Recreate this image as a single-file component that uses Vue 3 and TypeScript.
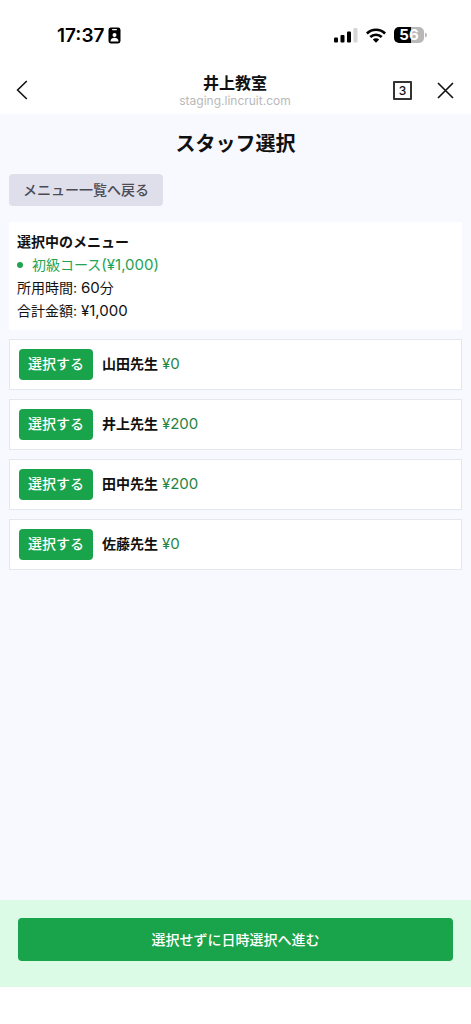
<script setup lang="ts">
interface Staff {
  id: number
  name: string
  fee: number
}

const menuItems = [{ id: 1, name: '初級コース', price: 1000 }]

const staffList: Staff[] = [
  { id: 1, name: '山田先生', fee: 0 },
  { id: 2, name: '井上先生', fee: 200 },
  { id: 3, name: '田中先生', fee: 200 },
  { id: 4, name: '佐藤先生', fee: 0 },
]

const total = menuItems.reduce((sum, item) => sum + item.price, 0)
const yen = (value: number): string => '¥' + value.toLocaleString('en-US')
</script>

<template>
  <div class="screen">
    <div class="status">
      <div class="clock">
        <span>17:37</span>
        <svg width="13" height="17" viewBox="0 0 13 17" aria-hidden="true">
          <rect x="0.5" y="0.5" width="12" height="16" rx="2.4" fill="#000" />
          <rect x="4" y="2" width="5" height="1.2" rx="0.6" fill="#fff" />
          <circle cx="6.5" cy="8" r="2" fill="#fff" />
          <path d="M2.5 14.5c0-2.6 1.6-3.8 4-3.8s4 1.2 4 3.8z" fill="#fff" />
        </svg>
      </div>
      <div class="signals">
        <svg width="24" height="16" viewBox="0 0 24 16" aria-hidden="true">
          <rect x="0" y="10.5" width="4" height="5" rx="1" />
          <rect x="6.5" y="8" width="4" height="7.5" rx="1" />
          <rect x="13" y="4.5" width="4" height="11" rx="1" />
          <rect x="19.5" y="1" width="4" height="14.5" rx="1" fill="#d6d6d6" />
        </svg>
        <svg width="20" height="15" viewBox="0 0 20 15" aria-hidden="true">
          <g fill="none" stroke="#000" stroke-width="2.6">
            <path d="M0.9 5.5a13 13 0 0 1 18.2 0" />
            <path d="M4.3 9a8.2 8.2 0 0 1 11.4 0" />
          </g>
          <path d="M10 14.8l-3.2-3.3a4.6 4.6 0 0 1 6.4 0z" />
        </svg>
        <div class="battery">
          <span class="level">56</span>
          <svg width="2" height="6" viewBox="0 0 2 6" aria-hidden="true">
            <path d="M0 0.5q2 0.6 2 2.5t-2 2.5z" fill="#b8b8b8" />
          </svg>
        </div>
      </div>
    </div>

    <header class="bar">
      <button class="icon" type="button" aria-label="戻る">
        <svg width="12" height="20" viewBox="0 0 12 20" aria-hidden="true">
          <path d="M10.8 1L1.6 10l9.2 9" fill="none" stroke="#111" stroke-width="1.6" />
        </svg>
      </button>
      <div class="site">
        <p class="site-name">井上教室</p>
        <p class="site-url">staging.lincruit.com</p>
      </div>
      <div class="actions">
        <button class="tabs" type="button">3</button>
        <button class="icon" type="button" aria-label="閉じる">
          <svg width="17" height="17" viewBox="0 0 17 17" aria-hidden="true">
            <path d="M1 1l15 15M16 1L1 16" fill="none" stroke="#111" stroke-width="1.6" />
          </svg>
        </button>
      </div>
    </header>

    <main class="content">
      <h1>スタッフ選択</h1>
      <button class="back" type="button">メニュー一覧へ戻る</button>

      <section class="summary">
        <h2>選択中のメニュー</h2>
        <ul>
          <li v-for="item in menuItems" :key="item.id">
            <span>{{ item.name }}<span class="num">({{ yen(item.price) }})</span></span>
          </li>
        </ul>
        <p>所用時間: <span class="num">60</span>分</p>
        <p>合計金額: <span class="num">{{ yen(total) }}</span></p>
      </section>

      <ul class="staff">
        <li v-for="staff in staffList" :key="staff.id">
          <button class="choose" type="button">選択する</button>
          <span class="label"><b>{{ staff.name }}</b> <span class="num fee">{{ yen(staff.fee) }}</span></span>
        </li>
      </ul>
    </main>

    <footer class="foot">
      <button class="proceed" type="button">選択せずに日時選択へ進む</button>
    </footer>
  </div>
</template>

<style>
body {
  margin: 0;
  background: #fff;
}
</style>

<style scoped>
.screen {
  box-sizing: border-box;
  min-height: 100vh;
  padding-bottom: 37px;
  display: flex;
  flex-direction: column;
  background: #fff;
  color: #111;
  font-family: Inter, "Noto Sans CJK JP", sans-serif;
  font-size: 14px;
  line-height: 23px;
}

h1,
h2,
p,
ul {
  margin: 0;
  padding: 0;
  font-size: inherit;
}

ul {
  list-style: none;
}

button {
  border: 0;
  margin: 0;
  padding: 0;
  font: inherit;
  color: inherit;
  background: none;
  cursor: pointer;
}

svg {
  display: block;
}

.num {
  font-size: 15px;
  line-height: 20px;
}

.status {
  height: 66px;
  padding: 4px 44px 0 57px;
  box-sizing: border-box;
  display: flex;
  align-items: center;
  justify-content: space-between;
  color: #000;
}

.clock {
  display: flex;
  align-items: center;
  gap: 4px;
  font-size: 19px;
  font-weight: 600;
}

.signals {
  display: flex;
  align-items: center;
  gap: 8px;
}

.battery {
  display: flex;
  align-items: center;
  gap: 1px;
}

.level {
  width: 30px;
  height: 16px;
  border-radius: 5px;
  background: linear-gradient(90deg, #000 56%, #b8b8b8 56%);
  color: #fff;
  font-size: 15px;
  font-weight: 700;
  line-height: 16px;
  text-align: center;
}

.bar {
  height: 48px;
  padding: 0 17px 0 16px;
  display: grid;
  grid-template-columns: 1fr auto 1fr;
  align-items: center;
}

.icon {
  justify-self: start;
}

.site {
  padding-top: 2px;
  text-align: center;
}

.site-name {
  font-size: 16px;
  font-weight: 700;
  line-height: 20px;
}

.site-url {
  color: #b9b9b9;
  font-size: 12px;
  line-height: 16px;
}

.actions {
  display: flex;
  align-items: center;
  justify-content: flex-end;
  gap: 25px;
}

.tabs {
  box-sizing: border-box;
  width: 19px;
  height: 19px;
  border: 2px solid #333;
  border-radius: 1px;
  font-size: 12px;
  font-weight: 500;
  line-height: 15px;
}

.content {
  flex: 1;
  padding: 16px 9px;
  background: #f8f9fe;
}

h1 {
  margin-bottom: 16px;
  font-size: 20px;
  font-weight: 700;
  line-height: 28px;
  text-align: center;
}

.back {
  display: block;
  height: 32px;
  padding: 0 14px 2px;
  border-radius: 4px;
  background: #dfdfeb;
  color: #4b4b55;
  font-weight: 500;
}

.summary {
  margin: 16px 0 9px;
  padding: 8px;
  background: #fff;
}

.summary h2 {
  font-weight: 700;
}

.summary li {
  display: flex;
  align-items: center;
  gap: 9px;
  color: #22a352;
}

.summary li::before {
  content: "";
  width: 6px;
  height: 6px;
  border-radius: 50%;
  background: #22a352;
}

.staff {
  display: flex;
  flex-direction: column;
  gap: 9px;
}

.staff li {
  display: flex;
  align-items: center;
  gap: 9px;
  padding: 9px;
  border: 1px solid #e5e7ee;
  background: #fff;
}

.choose {
  height: 31px;
  padding: 0 9px 2px;
  border-radius: 4px;
  background: #19a34a;
  color: #fff;
  font-weight: 500;
}

.label {
  padding-bottom: 2px;
}

.fee {
  color: #1f8446;
}

.foot {
  padding: 18px 18px 26px;
  background: #dcfbe6;
}

.proceed {
  display: block;
  width: 100%;
  height: 43px;
  border-radius: 4px;
  background: #19a34a;
  color: #fff;
  font-weight: 500;
}
</style>
